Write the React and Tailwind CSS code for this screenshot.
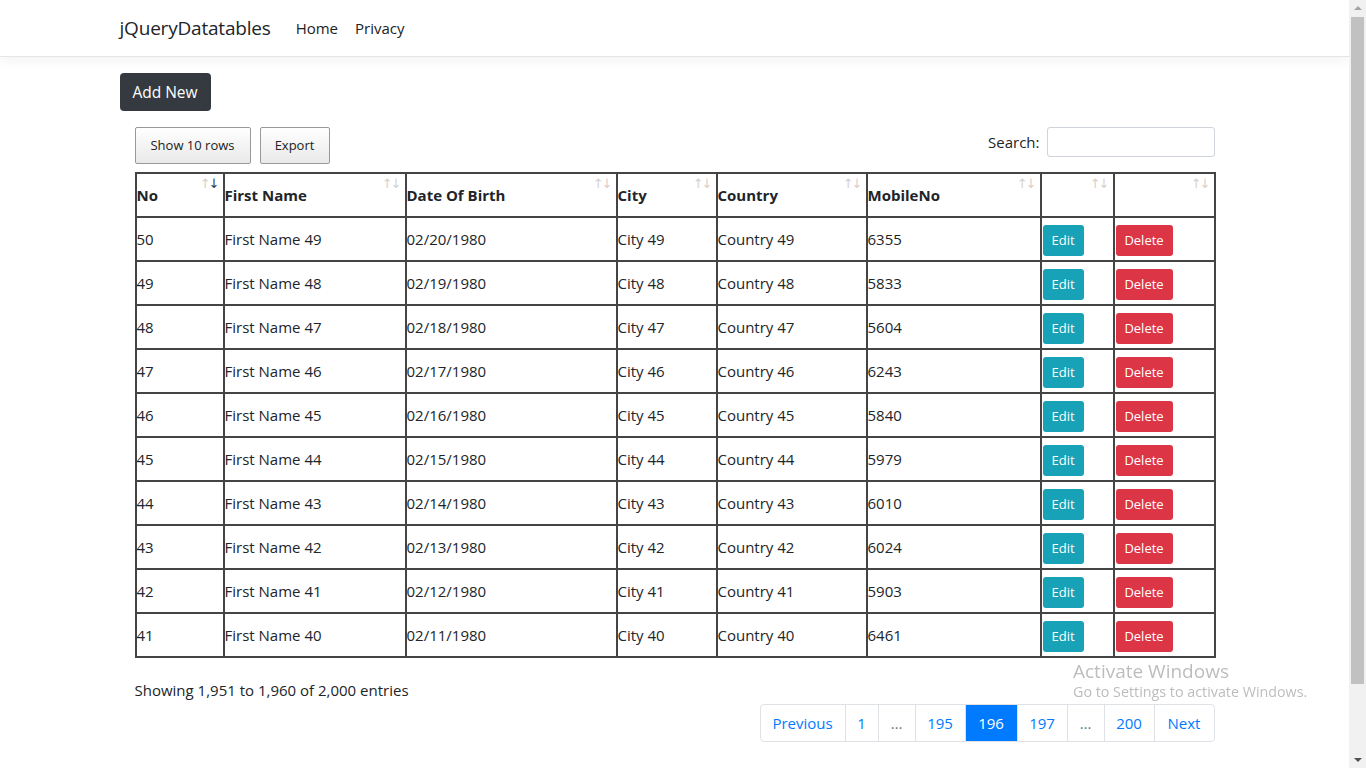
import React from "react";

const rows = [
  { no: 50, name: "First Name 49", dob: "02/20/1980", city: "City 49", country: "Country 49", mobile: "6355" },
  { no: 49, name: "First Name 48", dob: "02/19/1980", city: "City 48", country: "Country 48", mobile: "5833" },
  { no: 48, name: "First Name 47", dob: "02/18/1980", city: "City 47", country: "Country 47", mobile: "5604" },
  { no: 47, name: "First Name 46", dob: "02/17/1980", city: "City 46", country: "Country 46", mobile: "6243" },
  { no: 46, name: "First Name 45", dob: "02/16/1980", city: "City 45", country: "Country 45", mobile: "5840" },
  { no: 45, name: "First Name 44", dob: "02/15/1980", city: "City 44", country: "Country 44", mobile: "5979" },
  { no: 44, name: "First Name 43", dob: "02/14/1980", city: "City 43", country: "Country 43", mobile: "6010" },
  { no: 43, name: "First Name 42", dob: "02/13/1980", city: "City 42", country: "Country 42", mobile: "6024" },
  { no: 42, name: "First Name 41", dob: "02/12/1980", city: "City 41", country: "Country 41", mobile: "5903" },
  { no: 41, name: "First Name 40", dob: "02/11/1980", city: "City 40", country: "Country 40", mobile: "6461" },
];

const columns = [
  { label: "No", width: "w-[88px]", sorted: true },
  { label: "First Name", width: "w-[182px]" },
  { label: "Date Of Birth", width: "w-[211px]" },
  { label: "City", width: "w-[100px]" },
  { label: "Country", width: "w-[150px]" },
  { label: "MobileNo", width: "w-[174px]" },
  { label: "", width: "w-[73px]" },
  { label: "", width: "w-[101px]" },
];

const pages = [
  { label: "Previous", w: "w-[84px]" },
  { label: "1", w: "w-[33px]" },
  { label: "…", w: "w-[37px]", muted: true },
  { label: "195", w: "w-[50px]" },
  { label: "196", w: "w-[52px]", active: true },
  { label: "197", w: "w-[50px]" },
  { label: "…", w: "w-[37px]", muted: true },
  { label: "200", w: "w-[50px]" },
  { label: "Next", w: "w-[60px]" },
];

const SortIcon = ({ sorted }) => (
  <span className="absolute top-[3px] right-[5px] font-['DejaVu_Sans',sans-serif] text-[13px] leading-none tracking-[-2px] font-normal">
    <span className="text-[#d8d0cc]">↑</span>
    <span className={sorted ? "text-[#3a3a3a]" : "text-[#d8d0cc]"}>↓</span>
  </span>
);

const App = () => {
  return (
    <div className="min-h-screen bg-white text-[#212529] font-['Open_Sans',sans-serif] pr-[17px]">
      {/* navbar */}
      <nav className="h-[57px] border-b border-[#e5e5e5] shadow-[0_4px_12px_rgba(0,0,0,0.05)]">
        <div className="mx-auto w-[1140px] px-[15px] h-full flex items-center">
          <span className="text-[19px] text-[#212529] tracking-[-0.2px] mr-[25px]">jQueryDatatables</span>
          <span className="text-[15px] text-[#222] mr-[17px]">Home</span>
          <span className="text-[15px] text-[#222]">Privacy</span>
        </div>
      </nav>

      <main className="mx-auto w-[1140px] px-[15px] pt-[16px]">
        <button className="h-[38px] w-[91px] rounded-[4px] bg-[#343a40] text-white text-[15.5px] pt-[1px]">Add New</button>

        <div className="px-[15px] mt-[16px]">
          <div className="flex justify-between items-start">
            <div className="flex gap-[9px]">
              <button className="h-[37px] w-[116px] border border-[#999] rounded-[2px] bg-gradient-to-b from-white to-[#e9e9e9] text-[13px] text-[#222]">
                Show 10 rows
              </button>
              <button className="h-[37px] w-[70px] border border-[#999] rounded-[2px] bg-gradient-to-b from-white to-[#e9e9e9] text-[13px] text-[#222]">
                Export
              </button>
            </div>
            <label className="flex items-center gap-[7px] text-[15px]">
              Search:
              <input className="h-[30px] w-[168px] border border-[#ced4da] rounded-[3px] outline-none" />
            </label>
          </div>

          <table className="mt-[8px] w-[1079px] table-fixed border-collapse border-2 border-[#444] text-[15px]">
            <colgroup>
              {columns.map((c, i) => (
                <col key={i} className={c.width} />
              ))}
            </colgroup>
            <thead>
              <tr className="h-[44px]">
                {columns.map((c, i) => (
                  <th key={i} className="relative border-2 border-[#444] text-left align-bottom font-bold px-0 pb-[9px] leading-[24px]">
                    {c.label}
                    <SortIcon sorted={c.sorted} />
                  </th>
                ))}
              </tr>
            </thead>
            <tbody>
              {rows.map(r => (
                <tr key={r.no} className="h-[44px]">
                  <td className="border-2 border-[#444] px-0">{r.no}</td>
                  <td className="border-2 border-[#444] px-0">{r.name}</td>
                  <td className="border-2 border-[#444] px-0">{r.dob}</td>
                  <td className="border-2 border-[#444] px-0">{r.city}</td>
                  <td className="border-2 border-[#444] px-0">{r.country}</td>
                  <td className="border-2 border-[#444] px-0">{r.mobile}</td>
                  <td className="border-2 border-[#444] px-0 pl-[1px]">
                    <button className="mt-[3px] h-[31px] w-[41px] rounded-[3px] bg-[#17a2b8] text-white text-[13px]">Edit</button>
                  </td>
                  <td className="border-2 border-[#444] px-0 pl-[1px]">
                    <button className="mt-[3px] h-[31px] w-[57px] rounded-[3px] bg-[#dc3545] text-white text-[13px]">Delete</button>
                  </td>
                </tr>
              ))}
            </tbody>
          </table>

          <div className="pt-[20px] text-[15px] leading-[24px]">Showing 1,951 to 1,960 of 2,000 entries</div>

          <div className="flex justify-end mt-[2px]">
            <ul className="flex border border-[#dee2e6] rounded-[4px] overflow-hidden">
              {pages.map((p, i) => (
                <li
                  key={i}
                  className={
                    "h-[36px] flex items-center justify-center text-[15px] " +
                    p.w +
                    (i > 0 ? " border-l border-[#dee2e6]" : "") +
                    (p.active ? " bg-[#007bff] text-white border-[#007bff]" : p.muted ? " text-[#6c757d]" : " text-[#007bff]")
                  }
                >
                  {p.label}
                </li>
              ))}
            </ul>
          </div>
        </div>
      </main>

      {/* windows activation watermark */}
      <div className="fixed left-[1073px] top-[659px] text-[#bdbdbd] pointer-events-none">
        <div className="text-[19px] leading-[24px]">Activate Windows</div>
        <div className="text-[14.3px] leading-[20px] mt-[-1px]">Go to Settings to activate Windows.</div>
      </div>

      {/* scrollbar */}
      <div className="fixed top-0 right-0 w-[17px] h-screen bg-[#f1f1f1]">
        <div className="flex justify-center pt-[6px]">
          <div className="w-0 h-0 border-l-[4px] border-r-[4px] border-b-[4px] border-l-transparent border-r-transparent border-b-[#a3a3a3]" />
        </div>
        <div className="absolute left-[2px] right-[2px] top-[17px] h-[667px] bg-[#c1c1c1]" />
        <div className="absolute bottom-[6px] left-0 right-0 flex justify-center">
          <div className="w-0 h-0 border-l-[4px] border-r-[4px] border-t-[4px] border-l-transparent border-r-transparent border-t-[#505050]" />
        </div>
      </div>
    </div>
  );
};

export default App;
